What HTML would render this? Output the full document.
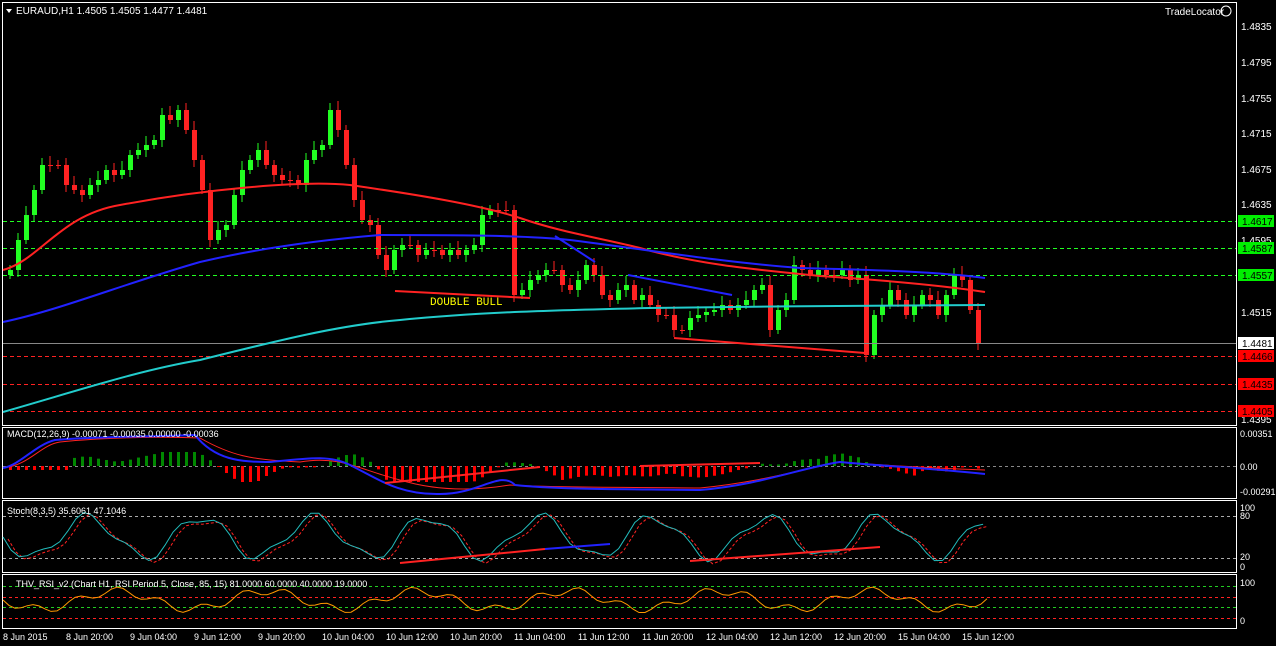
<!DOCTYPE html>
<html><head><meta charset="utf-8"><style>
html,body{margin:0;padding:0;background:#000;width:1276px;height:646px;overflow:hidden}
svg{display:block;font-family:"Liberation Sans",sans-serif}
</style></head><body>
<svg id="s" width="1276" height="646" viewBox="0 0 1276 646">
<rect width="1276" height="646" fill="#000"/>
<rect x="2.5" y="2.5" width="1234" height="423" fill="none" stroke="#fff"/>
<rect x="2.5" y="427.5" width="1234" height="71" fill="none" stroke="#fff"/>
<rect x="2.5" y="500.5" width="1234" height="72" fill="none" stroke="#fff"/>
<rect x="2.5" y="574.5" width="1234" height="54" fill="none" stroke="#fff"/>
<g id="g"></g>
<g stroke-dasharray="4,3" stroke-width="1">
<line x1="3" x2="1236" y1="221.5" y2="221.5" stroke="#2f2"/>
<line x1="3" x2="1236" y1="248.5" y2="248.5" stroke="#2f2"/>
<line x1="3" x2="1236" y1="275.5" y2="275.5" stroke="#2f2"/>
<line x1="3" x2="1236" y1="356.5" y2="356.5" stroke="#f22"/>
<line x1="3" x2="1236" y1="384.5" y2="384.5" stroke="#f22"/>
<line x1="3" x2="1236" y1="411.5" y2="411.5" stroke="#f22"/>
</g>
<line x1="3" x2="1236" y1="343.5" y2="343.5" stroke="#888"/>
<path d="M3,270 C40,260 60,215 120,205 C200,190 300,180 350,185 C420,195 480,205 520,218 C560,232 600,238 640,248 C700,265 760,270 820,276 C880,280 940,285 985,292" fill="none" stroke="#f22" stroke-width="2"/>
<path d="M3,322 C60,310 120,285 200,262 C260,248 320,240 380,235 C450,235 520,235 570,240 C650,250 720,262 800,268 C880,270 940,272 985,278" fill="none" stroke="#22f" stroke-width="2"/>
<path d="M3,412 C80,390 140,370 200,360 C280,340 340,325 400,320 C480,312 560,310 650,308 C760,306 880,306 985,305" fill="none" stroke="#2cc" stroke-width="2"/>
<path d="M395,291 L530,298" stroke="#f22" stroke-width="2" fill="none"/>
<path d="M674,338 L865,353" stroke="#f22" stroke-width="2" fill="none"/>
<path d="M555,236 L595,262" stroke="#22f" stroke-width="2" fill="none"/>
<path d="M628,275 L732,295" stroke="#22f" stroke-width="2" fill="none"/>
<text x="430" y="305" fill="#ff0" font-size="11" font-family="Liberation Mono,monospace">DOUBLE BULL</text>
<path d="M6,9 L12,9 L9,13 Z" fill="#fff"/>
<text x="16" y="14" fill="#fff" font-size="10">EURAUD,H1  1.4505 1.4505 1.4477 1.4481</text>
<text x="1165" y="15" fill="#fff" font-size="10">TradeLocator</text>
<circle cx="1226" cy="11" r="5" fill="none" stroke="#fff"/>
<g fill="#fff" font-size="10">
<text x="1241" y="30">1.4835</text><text x="1241" y="66">1.4795</text><text x="1241" y="102">1.4755</text>
<text x="1241" y="137">1.4715</text><text x="1241" y="173">1.4675</text><text x="1241" y="208">1.4635</text>
<text x="1241" y="244">1.4595</text><text x="1241" y="316">1.4515</text><text x="1241" y="423">1.4395</text>
</g>
<g font-size="10">
<rect x="1238" y="215" width="36" height="12" fill="#0e0"/><text x="1242" y="225" fill="#000">1.4617</text>
<rect x="1238" y="242" width="36" height="12" fill="#0e0"/><text x="1242" y="252" fill="#000">1.4587</text>
<rect x="1238" y="269" width="36" height="12" fill="#0e0"/><text x="1242" y="279" fill="#000">1.4557</text>
<rect x="1238" y="337" width="36" height="12" fill="#fff"/><text x="1242" y="347" fill="#000">1.4481</text>
<rect x="1238" y="350" width="36" height="12" fill="#f00"/><text x="1242" y="360" fill="#000">1.4466</text>
<rect x="1238" y="378" width="36" height="12" fill="#f00"/><text x="1242" y="388" fill="#000">1.4435</text>
<rect x="1238" y="405" width="36" height="12" fill="#f00"/><text x="1242" y="415" fill="#000">1.4405</text>
</g>
<line x1="3" x2="1236" y1="466.5" y2="466.5" stroke="#888" stroke-dasharray="3,3"/>
<g id="macd"></g>
<text x="7" y="437" fill="#fff" font-size="9">MACD(12,26,9) -0.00071 -0.00035 0.00000 -0.00036</text>
<g fill="#fff" font-size="9"><text x="1240" y="437">0.00351</text><text x="1240" y="470">0.00</text><text x="1240" y="495">-0.00291</text></g>
<line x1="3" x2="1236" y1="516.5" y2="516.5" stroke="#aaa" stroke-dasharray="3,3"/>
<line x1="3" x2="1236" y1="558.5" y2="558.5" stroke="#aaa" stroke-dasharray="3,3"/>
<g id="st"></g>
<text x="7" y="514" fill="#fff" font-size="9">Stoch(8,3,5) 35.6061 47.1046</text>
<g fill="#fff" font-size="9"><text x="1240" y="511">100</text><text x="1240" y="519">80</text><text x="1240" y="560">20</text><text x="1240" y="570">0</text></g>
<g stroke-dasharray="3,3"><line x1="3" x2="1236" y1="586.5" y2="586.5" stroke="#2c2"/><line x1="3" x2="1236" y1="597.5" y2="597.5" stroke="#f22"/><line x1="3" x2="1236" y1="607.5" y2="607.5" stroke="#2c2"/><line x1="3" x2="1236" y1="618.5" y2="618.5" stroke="#f22"/></g>
<g id="rs"></g>
<text x="16" y="587" fill="#fff" font-size="9">THV_RSI_v2   (Chart H1,  RSI Period 5,  Close,  85,  15)   81.0000 60.0000 40.0000 19.0000</text>
<g fill="#fff" font-size="9"><text x="1240" y="586">100</text><text x="1240" y="624">0</text></g>
<g fill="#fff" font-size="9">
<text x="3" y="640">8 Jun 2015</text><text x="66" y="640">8 Jun 20:00</text><text x="130" y="640">9 Jun 04:00</text>
<text x="194" y="640">9 Jun 12:00</text><text x="258" y="640">9 Jun 20:00</text><text x="322" y="640">10 Jun 04:00</text>
<text x="386" y="640">10 Jun 12:00</text><text x="450" y="640">10 Jun 20:00</text><text x="514" y="640">11 Jun 04:00</text>
<text x="578" y="640">11 Jun 12:00</text><text x="642" y="640">11 Jun 20:00</text><text x="706" y="640">12 Jun 04:00</text>
<text x="770" y="640">12 Jun 12:00</text><text x="834" y="640">12 Jun 20:00</text><text x="898" y="640">15 Jun 04:00</text>
<text x="962" y="640">15 Jun 12:00</text>
</g>
</svg>
<script>
var c=[270,240,215,190,165,165,165,185,190,195,185,180,170,175,170,155,150,145,140,115,120,110,130,160,190,240,230,225,195,170,160,150,165,175,180,180,185,160,150,145,110,130,165,200,220,225,255,270,250,245,245,255,250,250,255,250,255,250,245,215,210,210,210,295,290,280,275,270,270,285,290,280,265,275,295,300,290,285,300,295,305,315,315,330,330,318,315,312,310,305,310,305,300,290,285,330,310,300,265,270,275,270,275,275,270,280,275,355,315,305,290,300,315,305,295,300,315,295,275,280,310,343];
var NS="http://www.w3.org/2000/svg",g=document.getElementById('g');
function el(p,t,a){var e=document.createElementNS(NS,t);for(var k in a)e.setAttribute(k,a[k]);p.appendChild(e);return e}
var prev=275;
c.forEach(function(v,i){var x=10+i*8,o=prev,up=v<o,col=up?'#2f2':'#f22';
var t=Math.min(o,v),b=Math.max(o,v);
el(g,'line',{x1:x,x2:x,y1:t-5-(i%3)*2,y2:b+4+(i%2)*3,stroke:col});
el(g,'rect',{x:x-2,y:t,width:5,height:Math.max(1,b-t),fill:col});prev=v;});
var m=document.getElementById('macd');
c.forEach(function(v,i){var x=10+i*8;
var hv=(i<8?8:( (c.slice(Math.max(0,i-6),i+1).reduce(function(a,b){return a+b},0)/Math.min(i+1,7)) - (c.slice(Math.max(0,i-20),i+1).reduce(function(a,b){return a+b},0)/Math.min(i+1,21)) ))*-0.5;
hv=Math.max(-16,Math.min(14,hv));
el(m,'rect',{x:x-1,y:hv>0?466-hv:466,width:3,height:Math.abs(hv)||1,fill:hv>0?'#080':'#f00'});});
el(m,'path',{d:'M3,468 C30,465 40,445 60,442 C100,438 160,436 200,438 C230,455 250,460 300,462 C340,455 360,470 400,480 C440,492 480,490 510,485 C560,488 640,487 700,488 C760,482 800,470 840,462 C880,465 930,468 985,470',fill:'none',stroke:'#f22'});
el(m,'path',{d:'M3,468 C20,465 35,445 55,440 C100,436 150,437 195,435 C215,460 240,462 270,462 C310,458 330,455 350,465 C380,480 400,495 440,494 C480,494 500,470 515,485 C560,490 640,489 700,490 C760,485 800,468 840,462 C880,466 930,468 985,474',fill:'none',stroke:'#22f',"stroke-width":2});
el(m,'path',{d:'M385,483 L540,467 M640,466 L760,463',fill:'none',stroke:'#f22',"stroke-width":2});
var s=document.getElementById('st'),pts=[],pts2=[];
for(var i=0;i<122;i++){var x=3+i*8.1;var y=537+20*Math.sin(i*0.45)+5*Math.sin(i*1.1);y=Math.max(512,Math.min(562,y));pts.push(x+','+y.toFixed(1));pts2.push((x+5)+','+(y+2).toFixed(1));}
el(s,'polyline',{points:pts2.join(' '),fill:'none',stroke:'#f22',"stroke-dasharray":'3,2'});
el(s,'polyline',{points:pts.join(' '),fill:'none',stroke:'#2bb'});
el(s,'path',{d:'M400,563 L545,549 M690,561 L880,547',fill:'none',stroke:'#f22',"stroke-width":2});
el(s,'path',{d:'M545,549 L610,544',fill:'none',stroke:'#22f',"stroke-width":2});
var r=document.getElementById('rs'),rp=[];
for(var i=0;i<165;i++){var x=3+i*6;var y=600+9*Math.sin(i*0.25)+4*Math.sin(i*0.9);y=Math.max(584,Math.min(620,y));rp.push(x+','+y.toFixed(1));}
el(r,'polyline',{points:rp.join(' '),fill:'none',stroke:'#f90'});
</script>
</body></html>
